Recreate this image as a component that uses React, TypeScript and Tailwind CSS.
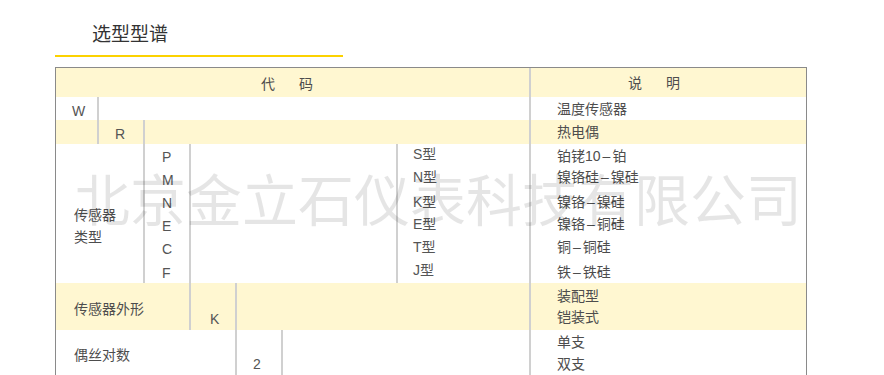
import React from "react";

const font = "font-['Liberation_Sans','Noto_Sans_CJK_SC',sans-serif]";
const line = "border-l-2 border-[#d0d0d0]";

function Desc({ children, className }: { children?: React.ReactNode; className?: string }) {
  return (
    <div className={`flex w-[277px] flex-col ${line} pl-[26px] text-[14px] leading-[20px] text-[#4d4d4d] ${className ?? ""}`}>
      {children}
    </div>
  );
}

// 带连字符的材料名
function Pair({ a, b }: { a: string; b: string }) {
  return (
    <div className="flex">
      <span>{a}</span>
      <span className="px-[2px]">–</span>
      <span>{b}</span>
    </div>
  );
}

export default function App() {
  return (
    <div className={`relative h-[375px] w-[884px] overflow-hidden bg-white ${font}`}>
      <div className="ml-[92px] mt-[21px] text-[19px] leading-[28px] text-[#333]">选型型谱</div>
      <div className="ml-[55px] mt-[6px] h-[2px] w-[288px] bg-[#fcd200]" />

      <div className="ml-[55px] mt-[10px] w-[752px] border border-b-0 border-[#8a8a8a] text-[14px] text-[#555]">
        {/* header */}
        <div className="flex h-[29px] bg-[#fff7d1]">
          <div className="flex w-[473px] pl-[205px] pt-[6px] leading-[20px] text-[#4d4d4d]">
            <span>代</span>
            <span className="ml-[24px]">码</span>
          </div>
          <Desc className="pl-[97px] pt-[5px]">
            <div className="flex">
              <span>说</span>
              <span className="ml-[24px]">明</span>
            </div>
          </Desc>
        </div>

        {/* W */}
        <div className="flex h-[23px] bg-white">
          <div className="flex w-[473px] leading-[20px]">
            <div className="w-[41px] pl-[16px] pt-[4px]">W</div>
            <div className={`flex-1 ${line}`} />
          </div>
          <Desc className="pt-[2px]">温度传感器</Desc>
        </div>

        {/* R */}
        <div className="flex h-[24px] bg-[#fff7d1]">
          <div className="flex w-[473px] leading-[20px]">
            <div className="w-[41px]" />
            <div className={`w-[46px] pl-[16px] pt-[4px] ${line}`}>R</div>
            <div className={`flex-1 ${line}`} />
          </div>
          <Desc className="pt-[2px]">热电偶</Desc>
        </div>

        {/* sensor type */}
        <div className="flex h-[139px] bg-white">
          <div className="flex w-[473px]">
            <div className="w-[87px] pl-[18px] pt-[60px] leading-[22px] text-[#4d4d4d]">
              <div>传感器</div>
              <div>类型</div>
            </div>
            <div className={`flex w-[46px] flex-col gap-[3px] pl-[17px] pt-[3px] leading-[20px] ${line}`}>
              <div>P</div>
              <div>M</div>
              <div>N</div>
              <div>E</div>
              <div>C</div>
              <div className="mt-[1px]">F</div>
            </div>
            <div className={`w-[207px] ${line}`} />
            <div className={`flex flex-1 flex-col pl-[15px] leading-[20px] ${line}`}>
              <div>S型</div>
              <div className="mt-[3px]">N型</div>
              <div className="mt-[5px]">K型</div>
              <div className="mt-[2px]">E型</div>
              <div className="mt-[3px]">T型</div>
              <div className="mt-[3px]">J型</div>
            </div>
          </div>
          <Desc>
            <div className="mt-[2px]">
              <Pair a="铂铑10" b="铂" />
            </div>
            <div className="mt-[1px]">
              <Pair a="镍铬硅" b="镍硅" />
            </div>
            <div className="mt-[5px]">
              <Pair a="镍铬" b="镍硅" />
            </div>
            <div className="mt-[2px]">
              <Pair a="镍铬" b="铜硅" />
            </div>
            <div className="mt-[3px]">
              <Pair a="铜" b="铜硅" />
            </div>
            <div className="mt-[5px]">
              <Pair a="铁" b="铁硅" />
            </div>
          </Desc>
        </div>

        {/* shape */}
        <div className="flex h-[47px] bg-[#fff7d1]">
          <div className="flex w-[473px] leading-[20px]">
            <div className="w-[133px] pl-[18px] pt-[16px] text-[#4d4d4d]">传感器外形</div>
            <div className={`w-[46px] pl-[19px] pt-[26px] ${line}`}>K</div>
            <div className={`flex-1 ${line}`} />
          </div>
          <Desc>
            <div className="mt-[3px]">装配型</div>
            <div className="mt-[1px]">铠装式</div>
          </Desc>
        </div>

        {/* pairs */}
        <div className="flex h-[60px] bg-white">
          <div className="flex w-[473px] leading-[20px]">
            <div className="w-[179px] pl-[18px] pt-[15px] text-[#4d4d4d]">偶丝对数</div>
            <div className={`w-[46px] pl-[16px] pt-[24px] ${line}`}>2</div>
            <div className={`flex-1 ${line}`} />
          </div>
          <Desc>
            <div className="mt-[2px]">单支</div>
            <div className="mt-[2px]">双支</div>
          </Desc>
        </div>
      </div>

      {/* watermark */}
      <div className="pointer-events-none absolute left-[74px] top-[169px] whitespace-nowrap text-[56px] leading-[56px] text-black/10 font-['Noto_Sans_CJK_SC',sans-serif]">
        北京金立石仪表科技有限公司
      </div>
    </div>
  );
}
